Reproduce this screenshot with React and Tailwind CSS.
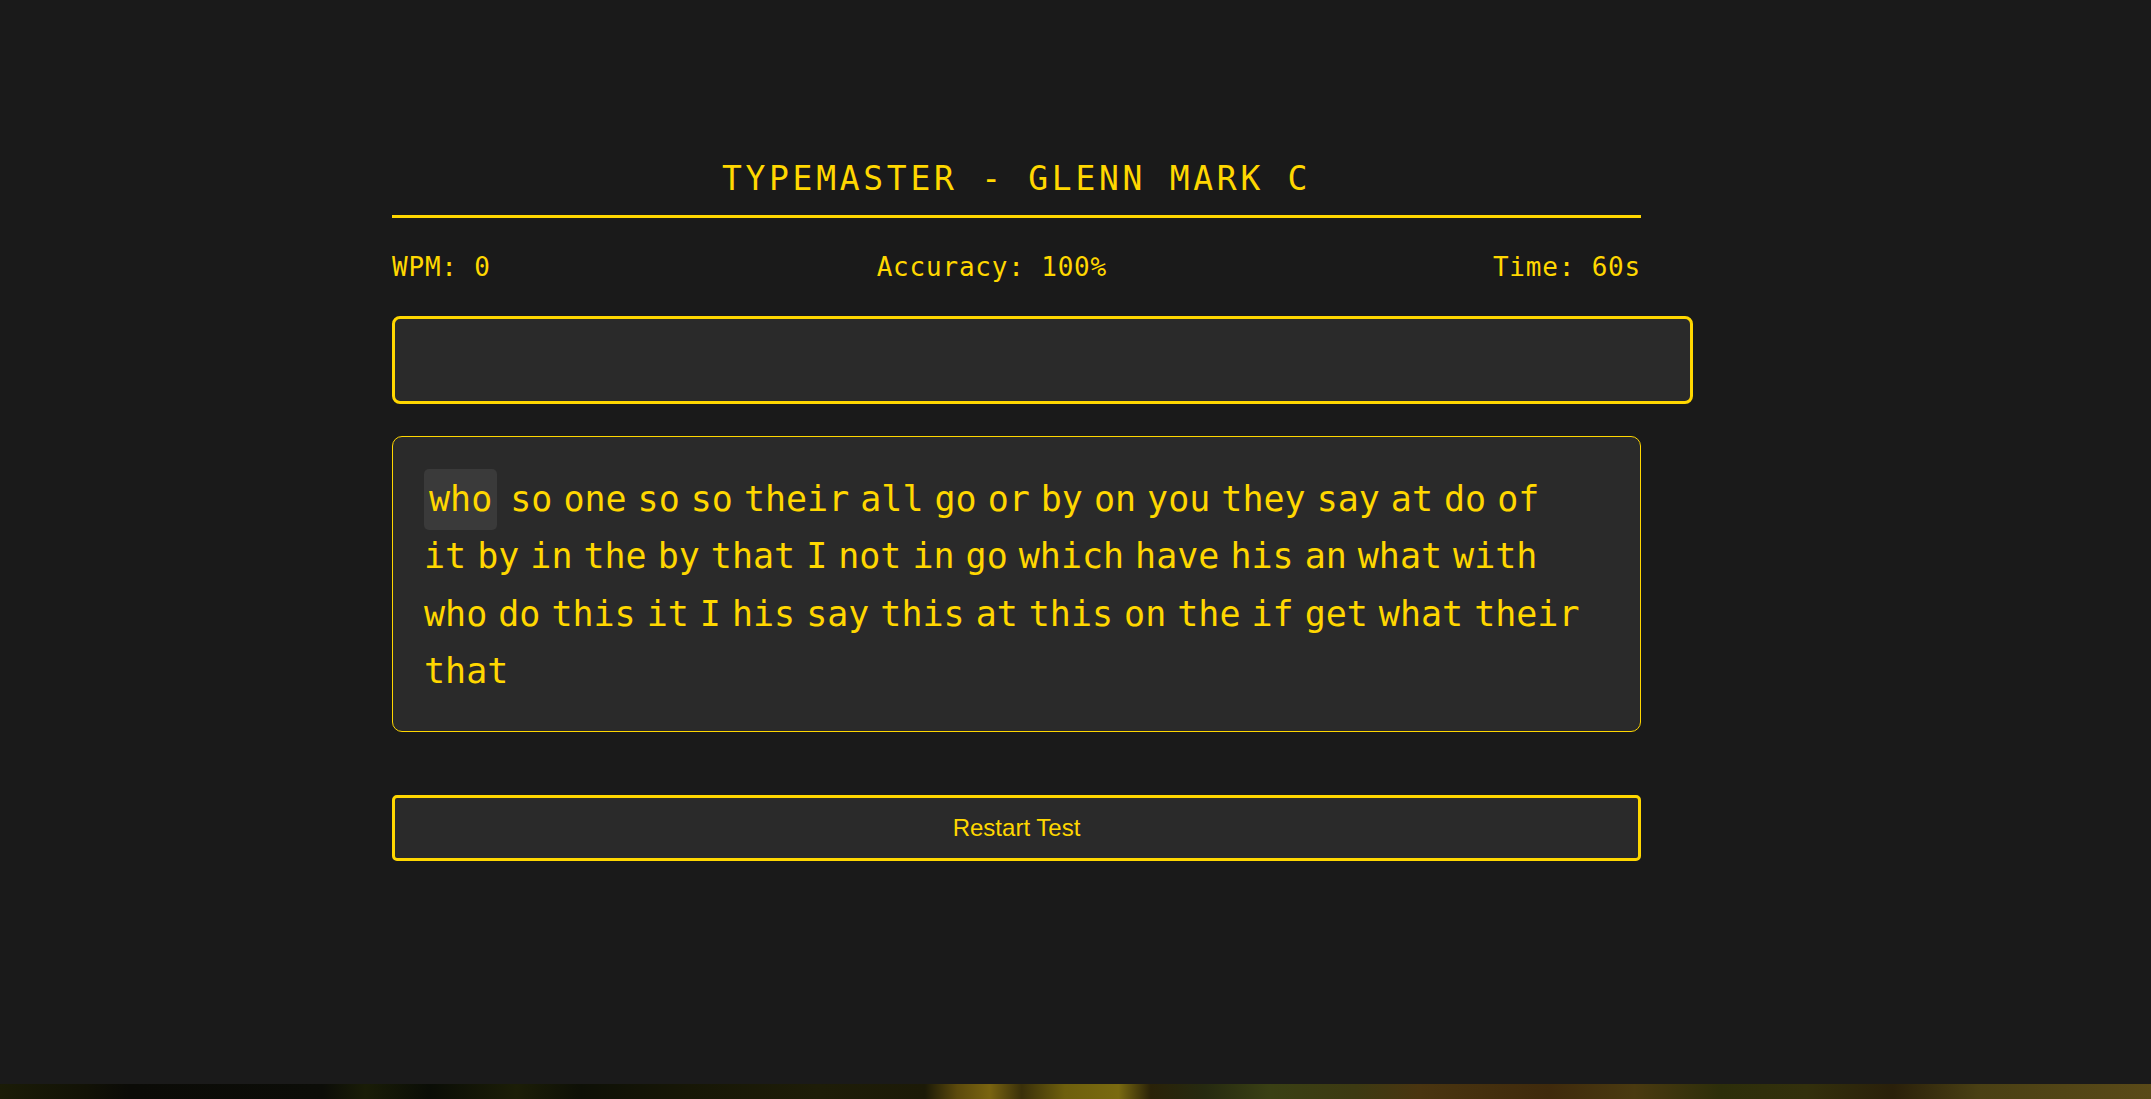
import React from 'react';

const lines = [
    ['who', 'so', 'one', 'so', 'so', 'their', 'all', 'go', 'or', 'by', 'on', 'you', 'they', 'say', 'at', 'do', 'of'],
    ['it', 'by', 'in', 'the', 'by', 'that', 'I', 'not', 'in', 'go', 'which', 'have', 'his', 'an', 'what', 'with'],
    ['who', 'do', 'this', 'it', 'I', 'his', 'say', 'this', 'at', 'this', 'on', 'the', 'if', 'get', 'what', 'their'],
    ['that'],
];

const App = () => {
    return (
        <div className="flex h-[1099px] flex-col bg-[#1a1a1a] font-['DejaVu_Sans_Mono',monospace] text-[#ffd700]">
            <main className="flex-1 pl-[392px] pt-[159px]">
                <div className="w-[1249px]">
                    {/* Header */}
                    <h1 className="border-b-[3px] border-[#ffd700] pb-4 text-center text-[33px] font-normal leading-[40px] tracking-[3.7px]">
                        TYPEMASTER - GLENN MARK C
                    </h1>

                    {/* Stats */}
                    <div className="mt-[34px] flex justify-between text-[26px] leading-[30px] tracking-[0.8px]">
                        <span>WPM: 0</span>
                        <span>Accuracy: 100%</span>
                        <span>Time: 60s</span>
                    </div>

                    {/* Typing input */}
                    <input
                        type="text"
                        aria-label="Type here"
                        className="mt-[34px] block h-[88px] w-[1301px] rounded-lg border-[3px] border-[#ffd700] bg-[#2a2a2a] px-5 text-[26px] text-[#ffd700] outline-none"
                    />

                    {/* Words to type */}
                    <div className="mt-[32px] rounded-[10px] border border-[#ffd700] bg-[#2a2a2a] pb-[30px] pl-[31px] pt-[34px] text-[35px] leading-[57.4px]">
                        {lines.map((line, i) => (
                            <div key={i} className="flex">
                                {line.map((word, j) => (
                                    i === 0 && j === 0 ? (
                                        <span key={j} className="-my-[2px] mr-[13px] rounded-[5px] bg-[#3a3a3a] px-[5px] py-[2px]">
                                            {word}
                                        </span>
                                    ) : (
                                        <span key={j} className="mr-[11px]">{word}</span>
                                    )
                                ))}
                            </div>
                        ))}
                    </div>

                    <button className="mt-[63px] block h-[66px] w-full rounded-[5px] border-[3px] border-[#ffd700] bg-[#2a2a2a] font-['Liberation_Sans',Arial,sans-serif] text-[24px] text-[#ffd700]">
                        Restart Test
                    </button>
                </div>
            </main>

            {/* background photo peeking out under the page */}
            <div className="h-[15px] bg-[linear-gradient(90deg,#1b1c07_0%,#121206_4%,#0b0b07_6%,#0c0d08_15%,#1a1d07_17%,#0a0d06_20%,#1c1e07_24%,#0e1006_27%,#171706_32%,#1e1d08_38%,#1c1a07_43%,#5c4a0c_44.5%,#7a6410_46%,#3a300a_47.5%,#6e5f0d_49.5%,#7a6a10_52%,#2a2208_53.5%,#262a10_56%,#3a4014_59%,#3d3a12_63%,#4a3510_66%,#3f2a0c_72%,#4a3a10_76%,#2d2e0a_80%,#33300c_84%,#2a200a_88%,#4a4014_92%,#5a4a18_100%)]" />
        </div>
    );
};

export default App;
